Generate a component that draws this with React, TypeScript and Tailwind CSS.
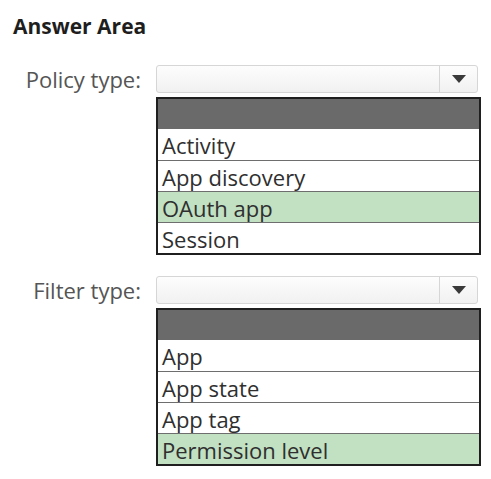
const policyOptions = [
  { label: 'Activity' },
  { label: 'App discovery' },
  { label: 'OAuth app', picked: true },
  { label: 'Session' },
];

const filterOptions = [
  { label: 'App' },
  { label: 'App state' },
  { label: 'App tag' },
  { label: 'Permission level', picked: true },
];

function Caret() {
  return (
    <svg width="14" height="8" viewBox="0 0 14 8">
      <path d="M0 0 L14 0 L7 8 Z" fill="#3a3a3a" />
    </svg>
  );
}

function DropRow({
  label,
  options,
}: {
  label: string;
  options: { label: string; picked?: boolean }[];
}) {
  return (
    <div className="flex">
      <div className="w-[156px] shrink-0 pr-[15px] h-[28px] flex items-center justify-end text-[22px] text-[#555]">
        {label}
      </div>
      <div className="flex flex-col">
        <div className="w-[322px] h-[28px] flex rounded-[3px] border border-[#d6d6d6] bg-gradient-to-b from-[#fdfdfd] to-[#f1f1f1]">
          <div className="flex-1" />
          <div className="w-[38px] border-l border-[#d6d6d6] flex items-center justify-center">
            <Caret />
          </div>
        </div>
        <div className="mt-[4px] w-[325px] border-2 border-[#1f1f1f] bg-white">
          <div className="h-[30px] bg-[#6a6a6a]" />
          {options.map((o, i) => (
            <div
              key={o.label}
              className={`h-[31px] flex items-center pl-[4px] pt-[2px] text-[22px] leading-[29px] text-[#2f2f2f] ${
                i > 0 ? 'border-t border-[#6e6e6e]' : ''
              } ${o.picked ? 'bg-[#c2e0c2]' : 'bg-white'}`}
            >
              {o.label}
            </div>
          ))}
        </div>
      </div>
    </div>
  );
}

export default function App() {
  return (
    <div
      className="w-[491px] h-[479px] bg-white pt-[14px]"
      style={{ fontFamily: '"Open Sans", "Noto Sans", sans-serif' }}
    >
      <h1 className="pl-[13px] text-[21px] leading-[24px] font-bold text-[#1e1e1e]">
        Answer Area
      </h1>
      <div className="mt-[27px] flex flex-col gap-[21px]">
        <DropRow label="Policy type:" options={policyOptions} />
        <DropRow label="Filter type:" options={filterOptions} />
      </div>
    </div>
  );
}
